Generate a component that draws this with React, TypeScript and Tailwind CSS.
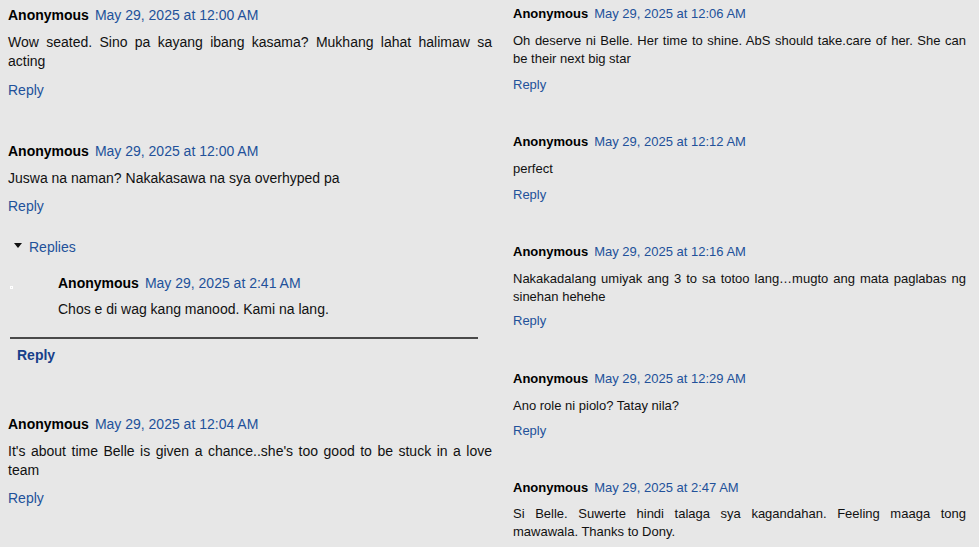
const linkBlue = "text-[#22519a]";

type Comment = {
  date: string;
  body: string;
  top: string;
  replyGap: string;
};

function Header({ date, small }: { date: string; small?: boolean }) {
  return (
    <div className={small ? "flex items-baseline leading-[18px]" : "flex items-baseline leading-[20px]"}>
      <span className="font-bold text-black">Anonymous</span>
      <span className={`ml-[6px] ${linkBlue}`}>{date}</span>
    </div>
  );
}

function LeftComment({ date, body, top, replyGap = "mt-[10px]" }: { date: string; body: string; top: string; replyGap?: string }) {
  return (
    <div className={top}>
      <Header date={date} />
      <p className="mt-2 text-justify leading-[19px] text-[#111]">{body}</p>
      <div className={`${replyGap} leading-[19px] ${linkBlue}`}>Reply</div>
    </div>
  );
}

function RightComment({ c }: { c: Comment }) {
  return (
    <div className={c.top}>
      <Header date={c.date} small />
      <p className="mt-[9px] text-justify leading-[18px] text-[#111]">{c.body}</p>
      <div className={`${c.replyGap} leading-[18px] ${linkBlue}`}>Reply</div>
    </div>
  );
}

const right: Comment[] = [
  {
    date: "May 29, 2025 at 12:06 AM",
    body: "Oh deserve ni Belle. Her time to shine. AbS should take.care of her. She can be their next big star",
    top: "",
    replyGap: "mt-[8px]",
  },
  { date: "May 29, 2025 at 12:12 AM", body: "perfect", top: "mt-[39px]", replyGap: "mt-[8px]" },
  {
    date: "May 29, 2025 at 12:16 AM",
    body: "Nakakadalang umiyak ang 3 to sa totoo lang…mugto ang mata paglabas ng sinehan hehehe",
    top: "mt-[39px]",
    replyGap: "mt-[6px]",
  },
  { date: "May 29, 2025 at 12:29 AM", body: "Ano role ni piolo? Tatay nila?", top: "mt-[40px]", replyGap: "mt-[7px]" },
];

export default function App() {
  return (
    <div
      className="flex h-[547px] w-[979px] overflow-hidden bg-[#e7e7e7] text-[14px]"
      style={{ fontFamily: '"Liberation Sans", Arial, sans-serif' }}
    >
      {/* left screenshot */}
      <div className="w-[500px] shrink-0 px-2 pt-[5px]">
        <LeftComment
          top=""
          date="May 29, 2025 at 12:00 AM"
          body="Wow seated. Sino pa kayang ibang kasama? Mukhang lahat halimaw sa acting"
        />
        <LeftComment
          top="mt-[41px]"
          replyGap="mt-[9px]"
          date="May 29, 2025 at 12:00 AM"
          body="Juswa na naman? Nakakasawa na sya overhyped pa"
        />

        <div className={`mt-[21px] flex items-center pl-[6px] leading-[20px] ${linkBlue}`}>
          <svg width="8" height="6" viewBox="0 0 8 6" className="mr-[7px] mb-[2px]">
            <path d="M0 0 H8 L4 5 Z" fill="#111" />
          </svg>
          Replies
        </div>

        <div className="relative mt-[16px] pl-[50px]">
          <span className="absolute left-[2px] top-[13px] h-[3px] w-[3px] border border-white bg-[#e7e7e7]" />
          <Header date="May 29, 2025 at 2:41 AM" />
          <p className="mt-[7px] leading-[19px] text-[#111]">Chos e di wag kang manood. Kami na lang.</p>
        </div>

        <div className="mt-[18px] ml-[2px] h-[2px] w-[468px] bg-[#4a4a4a]" />
        <div className="mt-[6px] pl-[9px] font-bold leading-[20px] text-[#173f8a]">Reply</div>

        <LeftComment
          top="mt-[49px]"
          replyGap="mt-[9px]"
          date="May 29, 2025 at 12:04 AM"
          body="It's about time Belle is given a chance..she's too good to be stuck in a love team"
        />
      </div>

      {/* right screenshot */}
      <div className="flex-1 pl-[13px] pr-[13px] pt-[5px] text-[13px]">
        {right.map((c) => (
          <RightComment key={c.date} c={c} />
        ))}
        <div className="mt-[39px]">
          <Header date="May 29, 2025 at 2:47 AM" small />
          <p className="mt-[8px] text-justify leading-[18px] text-[#111]">
            Si Belle. Suwerte hindi talaga sya kagandahan. Feeling maaga tong mawawala. Thanks to Dony.
          </p>
        </div>
      </div>
    </div>
  );
}
